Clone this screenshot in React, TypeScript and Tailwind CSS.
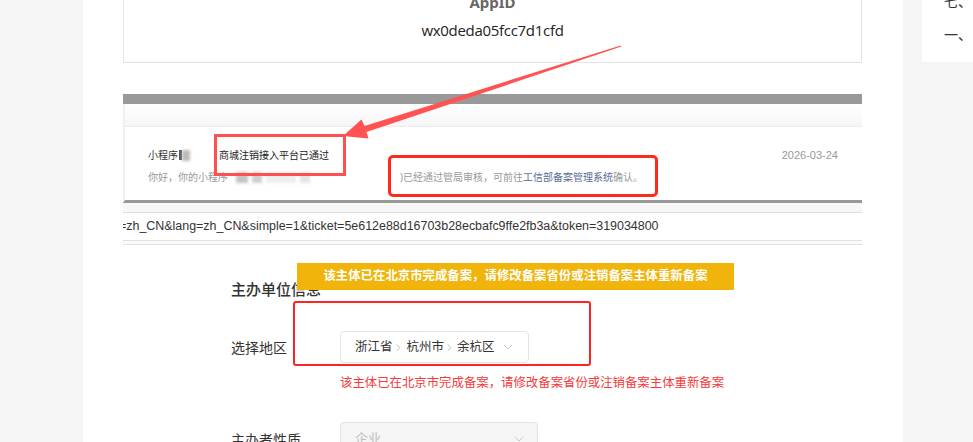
import { ChevronDown, ChevronRight } from 'lucide-react';

const FONT = { fontFamily: '"Noto Sans", "Noto Sans CJK SC", sans-serif' };

function Blur({ w, tone = 'bg-[#c8c8c8]' }: { w: number; tone?: string }) {
  return <span className={`inline-block h-[11px] ${tone} blur-[1.5px]`} style={{ width: w }} />;
}

export default function App() {
  return (
    <div className="relative flex h-[442px] w-[973px] overflow-hidden bg-[#f5f5f5] text-[#333]" style={FONT}>
      {/* left gutter */}
      <div className="w-[83px] shrink-0" />

      {/* main column */}
      <div className="flex w-[820px] shrink-0 flex-col bg-white">
        <div className="ml-[40px] flex w-[739px] flex-col">
          {/* AppID card */}
          <div className="-mt-[11px] flex h-[74px] flex-col items-center border border-[#e3e3e3]">
            <div className="pt-[2px] text-[15px] font-bold leading-[20px] text-[#666]">AppID</div>
            <div className="mt-[8px] text-[15px] leading-[20px] text-[#222]" style={{ fontFamily: '"Open Sans", sans-serif', letterSpacing: '-0.3px' }}>
              wx0deda05fcc7d1cfd
            </div>
          </div>

          {/* pasted notification screenshot */}
          <div className="mt-[31px] h-[10px] bg-[#999]" />
          <div className="flex flex-col border-b-[3px] border-l-2 border-b-[#999] border-l-[#f0f0f0]">
            <div className="h-[23px] border-b border-[#ececec] bg-gradient-to-b from-white to-[#f6f6f6]" />
            <div className="flex h-[73px] flex-col pl-[23px] text-[10px]">
              <div className="mt-[20px] flex h-[16px] items-center leading-[16px]">
                <span className="text-[#333]">小程序</span>
                <span className="ml-[1px] inline-block h-[10px] w-[3px] bg-[#555]" />
                <Blur w={8} tone="bg-[#bbb]" />
                <span className="ml-[29px] text-[#222]">商城注销接入平台已通过</span>
                <span className="ml-auto mr-[24px] text-[11px] text-[#999]" style={{ fontFamily: '"Liberation Sans", sans-serif' }}>2026-03-24</span>
              </div>
              <div className="mt-[6px] flex h-[16px] items-center leading-[16px] text-[#999]">
                <span>你好，你的小程序</span>
                <span className="ml-[8px] flex items-center gap-[4px]">
                  <Blur w={12} tone="bg-[#c4c4c4]" />
                  <Blur w={10} tone="bg-[#cfcfcf]" />
                  <Blur w={30} tone="bg-[#eeeeee]" />
                  <Blur w={10} tone="bg-[#e4e4e4]" />
                </span>
                <span className="ml-[90px]">)已经通过管局审核，可前往</span>
                <span className="text-[#576b95]">工信部备案管理系统</span>
                <span>确认。</span>
              </div>
            </div>
          </div>
          <div className="h-[9px] bg-[#f7f7f7]" />

          {/* address bar */}
          <div className="flex h-[28px] items-center overflow-hidden border-t border-[#dedede] bg-white">
            <span className="-ml-[4px] whitespace-nowrap text-[12.45px] text-[#333]" style={{ fontFamily: '"Liberation Sans", sans-serif' }}>
              =zh_CN&amp;lang=zh_CN&amp;simple=1&amp;ticket=5e612e88d16703b28ecbafc9ffe2fb3a&amp;token=319034800
            </span>
          </div>
          <div className="h-[5px] border-y border-[#e2e2e2] bg-[#fafafa]" />
        </div>

        {/* form */}
        <div className="ml-[148px] flex flex-col">
          <div className="mt-[33px] text-[15px] font-medium leading-[22px] text-[#333]">主办单位信息</div>

          <div className="mt-[31px] flex items-center">
            <div className="w-[109px] text-[14px] text-[#333]">选择地区</div>
            <div className="flex h-[32px] w-[189px] items-center whitespace-nowrap rounded-[4px] border border-[#e3e3e3] pl-[14px] pr-[12px] text-[12.5px] text-[#333]">
              <span>浙江省</span>
              <ChevronRight className="h-[11px] w-[11px] shrink-0 text-[#999]" strokeWidth={1.5} />
              <span className="ml-[3px]">杭州市</span>
              <ChevronRight className="h-[11px] w-[11px] shrink-0 text-[#999]" strokeWidth={1.5} />
              <span className="ml-[2px]">余杭区</span>
              <ChevronDown className="ml-auto h-[16px] w-[16px] shrink-0 text-[#bbb]" strokeWidth={1.2} />
            </div>
          </div>

          <div className="ml-[109px] mt-[11px] whitespace-nowrap text-[12.4px] leading-[18px] text-[#f43a3a]">
            该主体已在北京市完成备案，请修改备案省份或注销备案主体重新备案
          </div>

          <div className="mt-[30px] flex items-center">
            <div className="w-[109px] text-[14px] text-[#333]">主办者性质</div>
            <div className="flex h-[34px] w-[198px] items-center rounded-[4px] border border-[#e3e3e3] bg-[#f5f5f5] pl-[14px] pr-[10px] text-[13px] text-[#bbb]">
              <span>企业</span>
              <ChevronDown className="ml-auto h-[16px] w-[16px] shrink-0 text-[#bbb]" strokeWidth={1.2} />
            </div>
          </div>
        </div>
      </div>

      {/* right side */}
      <div className="w-[19px] shrink-0" />
      <div className="flex h-[62px] w-[51px] shrink-0 flex-col bg-white pl-[22px] text-[14px] leading-[20px] text-[#333]">
        <div className="-mt-[8px] whitespace-nowrap">七、</div>
        <div className="mt-[13px] whitespace-nowrap">一、 ⌐</div>
      </div>

      {/* toast banner */}
      <div className="absolute left-[297px] top-[263px] flex h-[27px] w-[437px] items-center justify-center whitespace-nowrap bg-[#f0b40a] text-[12.4px] font-bold text-white">
        该主体已在北京市完成备案，请修改备案省份或注销备案主体重新备案
      </div>

      {/* red annotations */}
      <div className="absolute left-[214px] top-[134px] h-[42px] w-[132px] border-[3px] border-[#ff4f4f]" />
      <div className="absolute left-[388px] top-[155px] h-[42px] w-[270px] rounded-[5px] border-[3px] border-[#ff2a1c]" />
      <div className="absolute left-[293px] top-[301px] h-[65px] w-[298px] rounded-[3px] border-2 border-[#ff2424]" />
      <svg className="pointer-events-none absolute left-0 top-0" width="973" height="442" viewBox="0 0 973 442">
        <path d="M620.6 45.4 L621.4 46.6 L366.5 132 L368.5 138.5 L343 136 L361.5 119.5 L364.5 126 Z" fill="#ff5252" />
      </svg>
    </div>
  );
}
